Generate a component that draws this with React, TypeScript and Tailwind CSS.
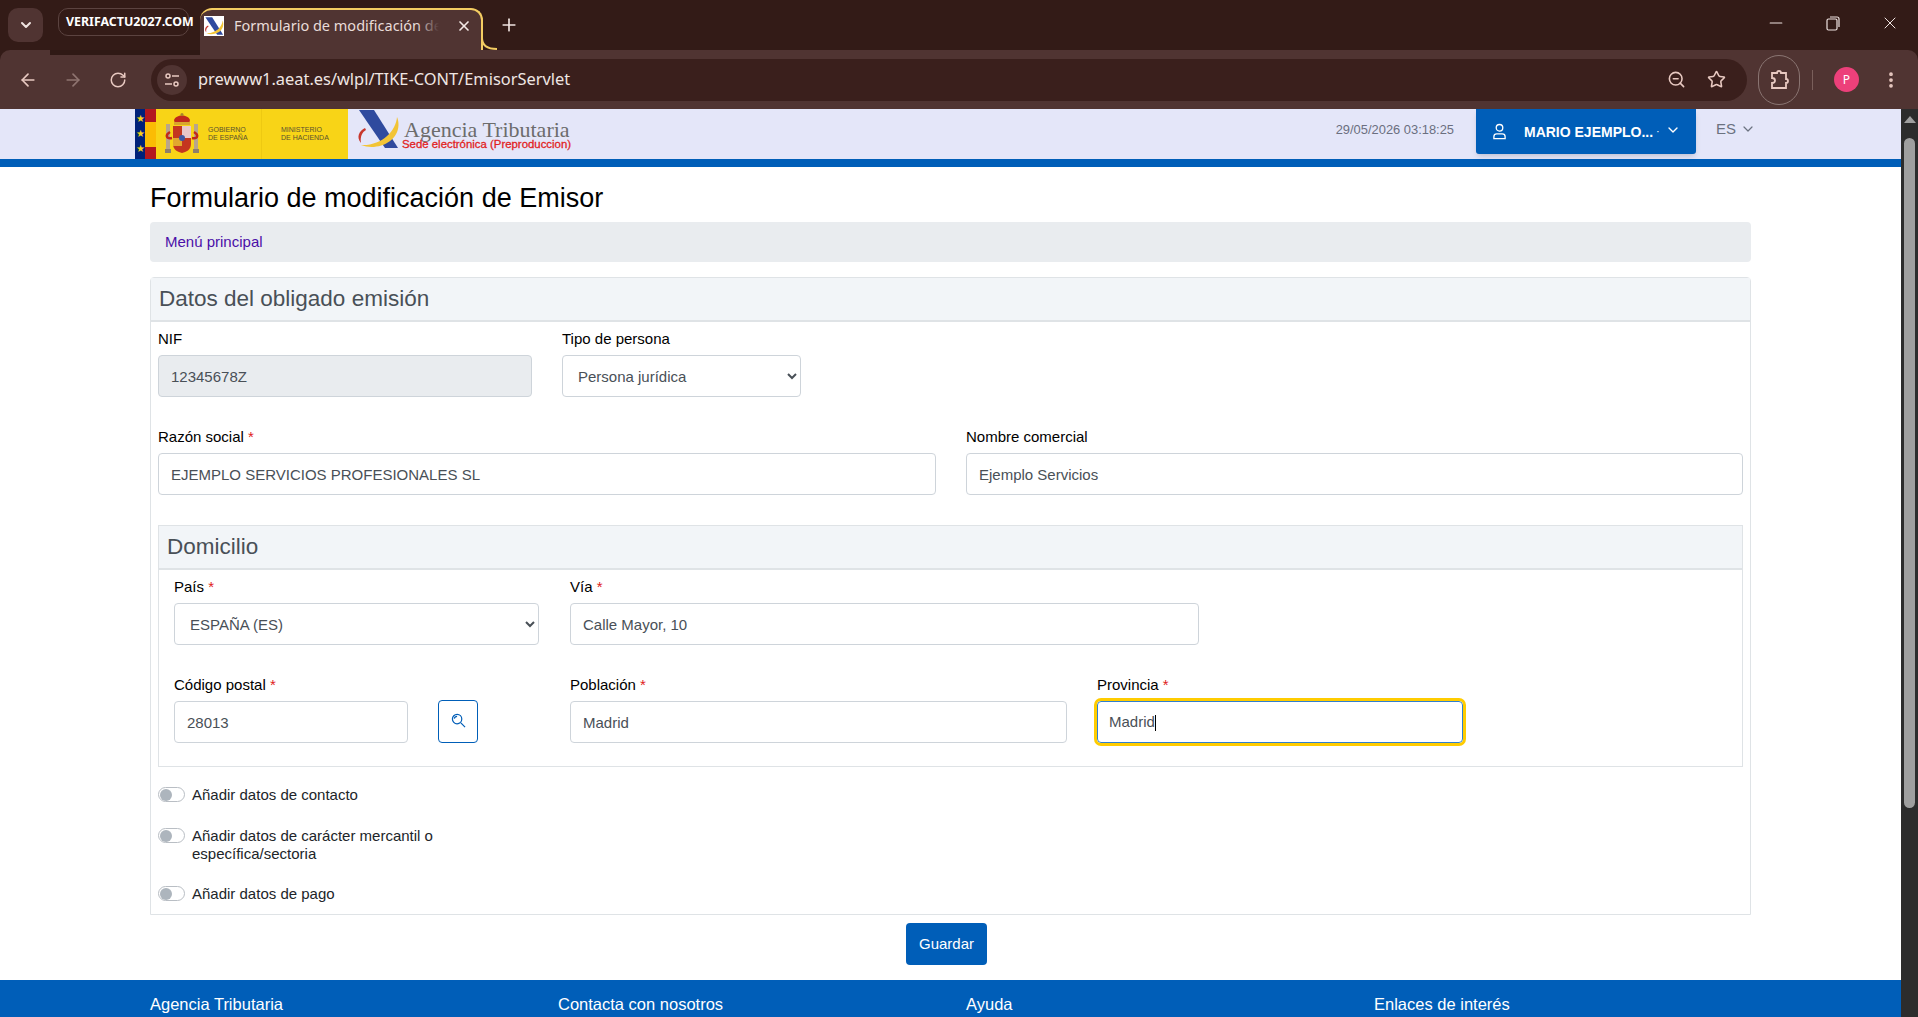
import React from 'react';
import { ArrowLeft, ArrowRight, RotateCw, Star, ZoomOut, ChevronDown, Plus, X, Minus, EllipsisVertical } from 'lucide-react';

// ── Logos ─────────────────────────────────────────────
function AeatMark({ className }: { className?: string }) {
  return (
    <svg viewBox="0 0 44 40" className={className}>
      <polygon points="3,1 18,1 42,39 29,39" fill="#2f4a9e" />
      <path d="M41 8 C40 22 26 37 5 36 C20 42 42 34 42.500 16 C42.500 13 42 10 41 8Z" fill="#f2c436" />
      <path d="M9 19 C3 22 0 28 5 34 C4 28 6 23 10 21Z" fill="#c8372d" />
    </svg>
  );
}

function Crest() {
  return (
    <svg viewBox="0 0 36 44" className="w-[36px] h-[44px]">
      <rect x="2" y="12" width="4" height="26" fill="#b9a58a" />
      <rect x="30" y="12" width="4" height="26" fill="#b9a58a" />
      <rect x="1" y="37" width="6" height="4" fill="#8f8068" />
      <rect x="29" y="37" width="6" height="4" fill="#8f8068" />
      <path d="M6 20 C1 23 2 27 8 26 M30 20 C35 23 34 27 28 26" stroke="#c0281c" strokeWidth="2.500" fill="none" />
      <path d="M10 8 C12 2 24 2 26 8 L25 12 L11 12Z" fill="#c0281c" />
      <rect x="10" y="10" width="16" height="3" fill="#d9a52c" />
      <circle cx="18" cy="2.500" r="1.500" fill="#a8842a" />
      <path d="M9 14 H27 V32 C27 38 22 40 18 41 C14 40 9 38 9 32Z" fill="#c4361f" />
      <rect x="18" y="14" width="9" height="12" fill="#e9c6c9" />
      <rect x="9" y="26" width="9" height="8" fill="#e2a72e" />
      <circle cx="18" cy="26" r="3" fill="#3f57a3" />
    </svg>
  );
}

function GovLogo() {
  return (
    <div className="flex h-full w-[213px] shrink-0">
      <div className="w-[10px] bg-[#00217a] flex flex-col items-center justify-center gap-[5px] text-[#f8d417] text-[10px] leading-[10px]">
        <span>★</span>
        <span>★</span>
        <span>★</span>
      </div>
      <div className="w-[11px] bg-[linear-gradient(#b3181f_25%,#fbbc04_25%,#fbbc04_75%,#b3181f_75%)]" />
      <div className="flex-1 bg-[#f8d417] flex items-center pl-[8px] text-[#5a5230] text-[7px] leading-[8px] uppercase">
        <Crest />
        <div className="ml-[8px] w-[54px] border-r border-[#eec912] h-full flex flex-col justify-center">
          <span>Gobierno</span>
          <span>de España</span>
        </div>
        <div className="ml-[19px] flex flex-col justify-center">
          <span>Ministerio</span>
          <span>de Hacienda</span>
        </div>
      </div>
    </div>
  );
}

// ── Browser chrome ────────────────────────────────────
function TabStrip() {
  return (
    <div className="h-[50px] shrink-0 flex items-start pl-[8px] bg-[#331b17] text-[#f0e4e1]">
      <div className="mt-[8px] w-[35px] h-[34px] rounded-[10px] bg-[#503432] flex items-center justify-center">
        <ChevronDown size={16} strokeWidth={3} />
      </div>
      <div className="mt-[8px] ml-[15px] w-[131px] h-[28px] rounded-[10px] border border-[#5b4340] flex items-center pl-[7px] whitespace-nowrap text-white text-[12.400px] font-bold font-['Noto_Sans',sans-serif]">
        VERIFACTU2027.COM
      </div>
      <div className="relative mt-[8px] ml-[11px] w-[283px] h-[42px] bg-[#503432] rounded-t-[12px] border-t-2 border-r-2 border-[#f4cd62] flex items-center pl-[4px] pb-[8px]">
        <div className="w-[20px] h-[20px] bg-white shrink-0">
          <AeatMark className="w-[20px] h-[20px]" />
        </div>
        <div className="relative ml-[10px] w-[205px]">
          <span className="block overflow-hidden whitespace-nowrap text-[14.500px] text-[#e9dcd9] font-['Noto_Sans',sans-serif]">
            Formulario de modificación de Emisor
          </span>
          <div className="absolute right-0 top-0 bottom-0 w-[22px] bg-gradient-to-r from-transparent to-[#503432]" />
        </div>
        <X size={16} strokeWidth={2.500} className="ml-[17px] text-[#f3e9e6]" />
        <svg viewBox="0 0 17 12" className="absolute right-[-17px] bottom-0 w-[17px] h-[12px]">
          <path d="M1 0 C1 7 5 11 16 11" stroke="#f4cd62" strokeWidth="2" fill="none" />
        </svg>
      </div>
      <Plus size={20} strokeWidth={2} className="mt-[15px] ml-[16px]" />
      <div className="ml-auto flex h-[46px] items-center">
        <div className="w-[57px] flex justify-center"><Minus size={20} strokeWidth={1.300} /></div>
        <div className="w-[57px] flex justify-center">
          <svg viewBox="0 0 14 16" className="w-[14px] h-[16px]" fill="none" stroke="currentColor" strokeWidth="1.200">
            <rect x="1" y="4" width="10" height="11" rx="1.500" />
            <path d="M4 2 H11 Q13 2 13 4 V12" />
          </svg>
        </div>
        <div className="w-[57px] flex justify-center"><X size={20} strokeWidth={1.200} /></div>
      </div>
    </div>
  );
}

function Toolbar() {
  return (
    <div className="relative h-[59px] shrink-0 bg-[#331b17]">
      <div className="h-full rounded-t-[10px] bg-[#503432] flex items-center pl-[5px] text-[#e8c9c1]">
        <div className="w-[45px] flex justify-center"><ArrowLeft size={20} strokeWidth={2} /></div>
        <div className="w-[45px] flex justify-center text-[#8f7470]"><ArrowRight size={20} strokeWidth={2} /></div>
        <div className="w-[45px] flex justify-center"><RotateCw size={18} strokeWidth={2} /></div>
        <div className="ml-[11px] w-[1596px] h-[42px] rounded-full bg-[#3a1f1c] flex items-center pl-[6px]">
          <div className="w-[30px] h-[30px] rounded-full bg-[#503432] flex items-center justify-center">
            <svg viewBox="0 0 16 16" className="w-[16px] h-[16px]" fill="none" stroke="currentColor" strokeWidth="1.500">
              <circle cx="4" cy="4" r="2" />
              <path d="M8 4 H15 M1 12 H8" />
              <circle cx="12" cy="12" r="2" />
            </svg>
          </div>
          <span className="ml-[11px] text-[16.400px] text-[#efe6e3] font-['Noto_Sans',sans-serif]">prewww1.aeat.es/wlpl/TIKE-CONT/EmisorServlet</span>
          <div className="ml-auto mr-[11px] flex">
            <div className="w-[40px] flex justify-center"><ZoomOut size={19} strokeWidth={2} /></div>
            <div className="w-[40px] flex justify-center"><Star size={19} strokeWidth={2} /></div>
          </div>
        </div>
        <div className="ml-[11px] w-[42px] h-[50px] rounded-full border border-[#8a7572] flex items-center justify-center">
          <svg viewBox="0 0 20 20" className="w-[20px] h-[20px]" fill="none" stroke="currentColor" strokeWidth="1.800">
            <path d="M3 3 H8 Q8 1 10 1 Q12 1 12 3 H17 V9 Q19 9 19 11 Q19 13 17 13 V18 H3 V13 Q6 13 6 10.500 Q6 8 3 8Z" />
          </svg>
        </div>
        <div className="ml-[12px] w-[1px] h-[20px] bg-[#7a5f5b]" />
        <div className="ml-[21px] w-[25px] h-[25px] rounded-full bg-[#ec407a] flex items-center justify-center text-white text-[12px] font-['Noto_Sans',sans-serif]">P</div>
        <div className="ml-[22px] w-[20px] flex justify-center"><EllipsisVertical size={20} strokeWidth={2.500} /></div>
      </div>
      <div className="absolute left-[50px] top-0 w-[150px] h-[5px] bg-[#2f1915]" />
    </div>
  );
}

// ── Page ──────────────────────────────────────────────
function SiteHeader() {
  return (
    <div className="h-[58px] shrink-0 bg-[#e4e6f9] border-b-8 border-[#005eb8] flex items-start pl-[135px] pr-[145px]">
      <GovLogo />
      <div className="ml-[8px] flex h-full">
        <AeatMark className="w-[44px] h-[40px]" />
        <div className="ml-[4px] pt-[9px] flex flex-col w-[170px]">
          <span className="font-['Liberation_Serif',serif] text-[22px] leading-[23px] text-[#6c6c6c] whitespace-nowrap">Agencia Tributaria</span>
          <span className="-mt-[3px] -ml-[2px] text-[11.400px] leading-[13px] text-[#e11f1f] [-webkit-text-stroke:0.3px_#e11f1f] whitespace-nowrap">Sede electrónica (Preproduccion)</span>
        </div>
      </div>
      <div className="ml-auto flex items-start">
        <span className="mt-[13px] text-[12.900px] leading-[16px] text-[#6b6f80]">29/05/2026 03:18:25</span>
        <div className="ml-[22px] w-[220px] h-[45px] bg-[#005eb8] rounded-b-[3px] shadow-md flex items-center pl-[16px] text-white">
          <svg viewBox="0 0 16 18" className="w-[15px] h-[17px]" fill="none" stroke="currentColor" strokeWidth="1.400">
            <circle cx="8" cy="5" r="3.500" />
            <path d="M2 16.500 V14.500 Q2 11.500 5 11.500 H11 Q14 11.500 14 14.500 V16.500Z" />
          </svg>
          <span className="ml-[17px] pt-[1px] text-[14px] font-bold whitespace-nowrap">MARIO EJEMPLO...</span>
          <span className="ml-[3px] text-[11px]">·</span>
          <ChevronDown size={16} strokeWidth={2} className="ml-[5px] -mt-[4px]" />
        </div>
        <div className="ml-[20px] mt-[10px] flex items-center text-[#6b7280] text-[15px] leading-[20px]">
          ES
          <ChevronDown size={16} strokeWidth={1.800} className="ml-[4px]" />
        </div>
      </div>
    </div>
  );
}

function Label({ text, required }: { text: string; required?: boolean }) {
  return (
    <div className="h-[22px] pt-[1px] mb-[6px] text-[15px] leading-[22px] text-black">
      {text}
      {required && <span className="text-[#e02020]"> *</span>}
    </div>
  );
}

const INPUT = 'block w-full h-[42px] px-[11px] pt-[1px] rounded-[4px] border border-[#ced4da] text-[15px] text-[#495057] outline-none';

function TextField({ label, value, required, width, disabled }: { label: string; value: string; required?: boolean; width: string; disabled?: boolean }) {
  return (
    <div className={width}>
      <Label text={label} required={required} />
      <input readOnly value={value} className={`${INPUT} pl-[12px] ${disabled ? 'bg-[#e9ecef]' : 'bg-white'}`} />
    </div>
  );
}

function SelectField({ label, value, required, width }: { label: string; value: string; required?: boolean; width: string }) {
  return (
    <div className={width}>
      <Label text={label} required={required} />
      <select defaultValue={value} className={`${INPUT} bg-white`}>
        <option>{value}</option>
      </select>
    </div>
  );
}

function Toggle({ children }: { children: React.ReactNode }) {
  return (
    <div className="flex items-start text-[15px] leading-[18px] text-[#212529]">
      <div className="mt-[1px] w-[27px] h-[15px] shrink-0 rounded-full border border-[#b9bec4] bg-white flex items-center pl-[1px]">
        <div className="w-[12px] h-[12px] rounded-full bg-[#adb5bd]" />
      </div>
      <span className="ml-[7px] w-[290px]">{children}</span>
    </div>
  );
}

function SectionHeader({ title }: { title: string }) {
  return (
    <div className="h-[44px] pl-[8px] bg-[#f2f5f8] border-b-2 border-[#dfe3e6] flex items-center text-[22.500px] text-[#495057]">
      {title}
    </div>
  );
}

function Form() {
  return (
    <div className="ml-[150px] w-[1601px]">
      <h1 className="h-[55px] pt-[16px] text-[27px] leading-[30px] text-black">Formulario de modificación de Emisor</h1>
      <div className="h-[40px] rounded-[4px] bg-[#e9ecef] flex items-center pl-[15px] text-[15px] text-[#4b0fa8]">Menú principal</div>

      <div className="mt-[15px] border border-[#dfe3e6] rounded-t-[4px]">
        <SectionHeader title="Datos del obligado emisión" />
        <div className="pl-[7px] pr-[7px] pt-[5px] pb-[11px]">
          <div className="flex gap-[30px]">
            <TextField label="NIF" value="12345678Z" width="w-[374px]" disabled />
            <SelectField label="Tipo de persona" value="Persona jurídica" width="w-[239px]" />
          </div>
          <div className="mt-[28px] flex gap-[30px]">
            <TextField label="Razón social" required value="EJEMPLO SERVICIOS PROFESIONALES SL" width="w-[778px]" />
            <TextField label="Nombre comercial" value="Ejemplo Servicios" width="w-[777px]" />
          </div>

          <div className="mt-[30px] border border-[#dfe3e6]">
            <SectionHeader title="Domicilio" />
            <div className="pl-[15px] pt-[5px] pb-[23px]">
              <div className="flex gap-[31px]">
                <SelectField label="País" required value="ESPAÑA (ES)" width="w-[365px]" />
                <TextField label="Vía" required value="Calle Mayor, 10" width="w-[629px]" />
              </div>
              <div className="mt-[28px] flex">
                <TextField label="Código postal" required value="28013" width="w-[234px]" />
                <div className="ml-[30px] mt-[27px] w-[40px] h-[43px] rounded-[4px] border border-[#005eb8] flex items-center justify-center text-[#005eb8]">
                  <svg viewBox="0 0 16 16" className="w-[15px] h-[15px] -mt-[2px]" fill="none" stroke="currentColor" strokeWidth="1.300">
                    <circle cx="6.500" cy="6.500" r="5" />
                    <path d="M10.500 10.500 L15 15 M3.500 6 Q4 3.500 6.500 3.500" />
                  </svg>
                </div>
                <div className="ml-[92px]">
                  <TextField label="Población" required value="Madrid" width="w-[497px]" />
                </div>
                <div className="ml-[30px] w-[366px]">
                  <Label text="Provincia" required />
                  <div className="h-[42px] px-[11px] pt-[1px] rounded-[4px] border border-[#2f7fd0] outline-3 outline-[#ffcc00] bg-white flex items-center text-[15px] text-[#495057]">
                    Madrid
                    <span className="w-[1px] h-[16px] bg-black" />
                  </div>
                </div>
              </div>
            </div>
          </div>

          <div className="mt-[19px]">
            <Toggle>Añadir datos de contacto</Toggle>
          </div>
          <div className="mt-[23px]">
            <Toggle>Añadir datos de carácter mercantil o específica/sectoria</Toggle>
          </div>
          <div className="mt-[22px]">
            <Toggle>Añadir datos de pago</Toggle>
          </div>
        </div>
      </div>

      <div className="mt-[8px] flex justify-center">
        <button className="-ml-[8px] w-[81px] h-[42px] rounded-[4px] bg-[#005eb8] text-white text-[15px]">Guardar</button>
      </div>
    </div>
  );
}

function Footer() {
  return (
    <div className="mt-[15px] h-[40px] bg-[#005eb8] pl-[150px] pt-[12px] grid grid-cols-[408px_408px_408px_408px] text-[16.500px] leading-[24px] text-white">
      <span>Agencia Tributaria</span>
      <span>Contacta con nosotros</span>
      <span>Ayuda</span>
      <span>Enlaces de interés</span>
    </div>
  );
}

function Scrollbar() {
  return (
    <div className="w-[17px] shrink-0 bg-[#2c2c2c] flex flex-col items-center">
      <div className="mt-[7px] w-0 h-0 border-x-[6px] border-x-transparent border-b-[7px] border-b-[#a0a0a0]" />
      <div className="mt-[15px] w-[11px] h-[670px] rounded-full bg-[#9f9f9f]" />
    </div>
  );
}

export default function App() {
  return (
    <div className="w-[1918px] h-[1017px] overflow-hidden flex flex-col bg-white font-['Liberation_Sans',sans-serif]">
      <TabStrip />
      <Toolbar />
      <div className="flex-1 min-h-0 flex">
        <div className="flex-1 min-w-0 overflow-hidden">
          <SiteHeader />
          <Form />
          <Footer />
        </div>
        <Scrollbar />
      </div>
    </div>
  );
}
